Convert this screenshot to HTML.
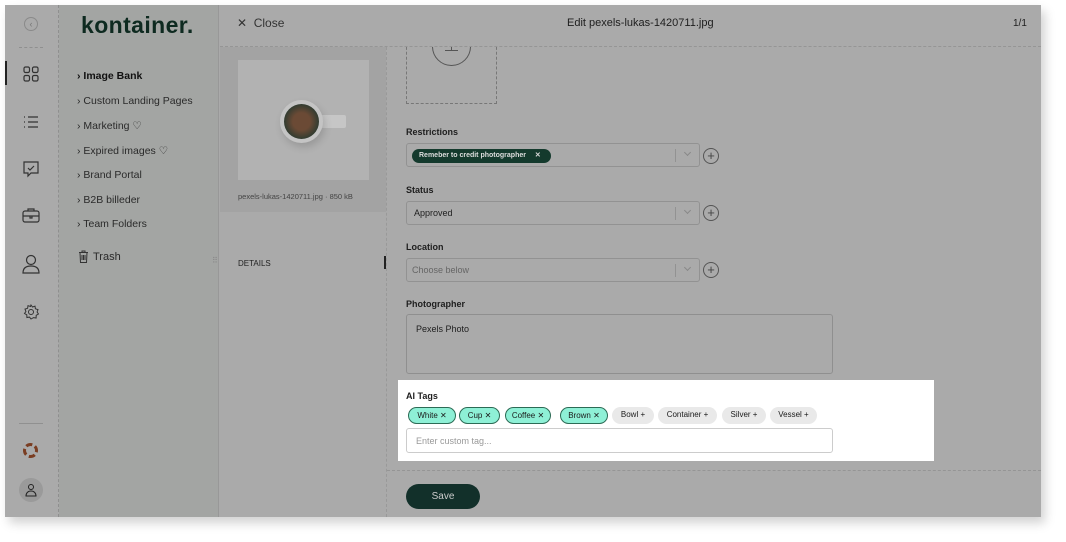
<!DOCTYPE html>
<html><head><meta charset="utf-8"><style>
*{box-sizing:border-box;margin:0;padding:0}
body{width:1066px;height:542px;background:#fff;font-family:"Liberation Sans",sans-serif;position:relative;overflow:hidden;color:#222}
.a{position:absolute}
.frame{left:5px;top:5px;width:1036px;height:512px;background:#aaa;box-shadow:4px 6px 10px rgba(0,0,0,.18)}
.t{position:absolute;font-size:10px;color:#1e1e1e;white-space:nowrap}
.sel{position:absolute;left:406px;width:294px;height:24px;border:1px solid #929292;border-radius:3px}
.sel .sep{position:absolute;right:23px;top:5px;width:1px;height:13px;background:#929292}
.sel .chev{position:absolute;right:9px;top:6px;width:5px;height:5px;border-right:1px solid #888;border-bottom:1px solid #888;transform:rotate(45deg)}
.plus{position:absolute;left:703px;width:16px;height:16px;border:1px solid #555;border-radius:50%;font-size:13px;line-height:13px;text-align:center;color:#444}
.lbl{position:absolute;left:406px;font-size:9px;font-weight:bold;color:#1e1e1e}
.nav{position:absolute;left:77px;font-size:10.5px;color:#2a2a2a}
.tag{position:absolute;top:407px;height:17px;border-radius:9px;font-size:8px;line-height:16px;text-align:center;color:#1a1a1a}
.on{background:#8ef0d6;border:1px solid #2c6b55}
.off{background:#e9e9e9}
</style></head><body>
<div class="a frame"></div>
<div class="a" style="left:58px;top:5px;width:1px;height:512px;border-left:1px dashed #8f8f8f"></div>
<div class="a" style="left:24px;top:17px;width:14px;height:14px;border:1px solid #8a8a8a;border-radius:50%;font-size:9px;line-height:12px;text-align:center;color:#777">‹</div>
<div class="a" style="left:19px;top:47px;width:24px;border-top:1px dashed #8f8f8f"></div>
<div class="a" style="left:5px;top:61px;width:2px;height:24px;background:#222"></div>
<svg class="a" style="left:23px;top:66px" width="16" height="16" fill="none" stroke="#333" stroke-width="1.2"><rect x="1" y="1" width="5.5" height="5.5" rx="1.5"/><rect x="9.5" y="1" width="5.5" height="5.5" rx="1.5"/><rect x="1" y="9.5" width="5.5" height="5.5" rx="1.5"/><rect x="9.5" y="9.5" width="5.5" height="5.5" rx="1.5"/></svg>
<svg class="a" style="left:23px;top:115px" width="16" height="14" stroke="#333" stroke-width="1.2"><path d="M1 2h1M1 7h1M1 12h1M5 2h10M5 7h10M5 12h10"/></svg>
<svg class="a" style="left:22px;top:160px" width="18" height="18" fill="none" stroke="#333" stroke-width="1.2"><path d="M2 2h14v11H9l-3 3v-3H2z"/><path d="M6 8l2 2 4-4"/></svg>
<svg class="a" style="left:22px;top:207px" width="18" height="16" fill="none" stroke="#333" stroke-width="1.2"><rect x="1" y="4" width="16" height="11" rx="2"/><path d="M6 4V2h6v2M1 9h16M8 9v2h2V9"/></svg>
<svg class="a" style="left:22px;top:254px" width="18" height="20" fill="none" stroke="#333" stroke-width="1.2"><circle cx="9" cy="6" r="4.5"/><path d="M1 19c0-5 3-7 8-7s8 2 8 7z"/></svg>
<svg class="a" style="left:23px;top:304px" width="16" height="16" fill="none" stroke="#333" stroke-width="1"><circle cx="8" cy="8" r="2.5"/><path d="M8 1l1.5 2 2.5-.8.4 2.6 2.6.8-.9 2.4 1.4 2-2.3 1.3-.1 2.7-2.6-.4L8 15l-1.5-1.9-2.6.4-.1-2.7L1.5 9.5l1.4-2L2 5.1l2.6-.8.4-2.6 2.5.8z"/></svg>
<div class="a" style="left:19px;top:423px;width:24px;border-top:1px solid #909090"></div>
<svg class="a" style="left:22px;top:442px" width="17" height="17"><circle cx="8.5" cy="8.5" r="6" fill="none" stroke="#7a3d22" stroke-width="3" stroke-dasharray="6.4 3" stroke-dashoffset="4.7"/></svg>
<div class="a" style="left:19px;top:478px;width:24px;height:24px;border-radius:50%;background:#9a9a9a"></div>
<svg class="a" style="left:25px;top:483px" width="12" height="14" fill="none" stroke="#222" stroke-width="1"><circle cx="6" cy="4" r="2.5"/><path d="M1 13c0-3 2-5 5-5s5 2 5 5z"/></svg>
<div class="a" style="left:59px;top:5px;width:160px;height:512px;background:#a3a5a3;border-right:1px solid #989898"></div>
<div class="a" style="left:81px;top:12px;font-size:23px;font-weight:bold;color:#0e2a20;letter-spacing:0.4px">kontainer.</div>
<div class="nav" style="top:70px;font-weight:bold;color:#111">› Image Bank</div>
<div class="nav" style="top:95px">› Custom Landing Pages</div>
<div class="nav" style="top:120px">› Marketing ♡</div>
<div class="nav" style="top:145px">› Expired images ♡</div>
<div class="nav" style="top:169px">› Brand Portal</div>
<div class="nav" style="top:194px">› B2B billeder</div>
<div class="nav" style="top:218px">› Team Folders</div>
<svg class="a" style="left:78px;top:250px" width="11" height="13" fill="none" stroke="#333" stroke-width="1"><path d="M1 2.5h9M4 2.5V1h3v1.5M2 2.5l.5 10h6l.5-10M4 5v5M5.5 5v5M7 5v5"/></svg>
<div class="nav" style="left:93px;top:251px;font-size:11px">Trash</div>
<div class="a" style="left:212px;top:256px;font-size:8px;color:#888">⠿</div>
<div class="a" style="left:220px;top:46px;width:821px;border-top:1px dashed #959595"></div>
<div class="t" style="left:237px;top:16px;font-size:12px;color:#333">✕ &nbsp;Close</div>
<div class="t" style="left:567px;top:17px;font-size:11px">Edit pexels-lukas-1420711.jpg</div>
<div class="t" style="left:1013px;top:18px;font-size:10px">1/1</div>
<div class="a" style="left:220px;top:47px;width:166px;height:165px;background:#a3a3a3"></div>
<div class="a" style="left:238px;top:60px;width:131px;height:120px;background:#b2b2b2"></div>
<div class="a" style="left:320px;top:115px;width:26px;height:13px;background:#c6c6c6;border-radius:2px"></div>
<div class="a" style="left:280px;top:100px;width:43px;height:43px;border-radius:50%;background:#c4c4c4;box-shadow:2px 4px 8px rgba(0,0,0,.15)"></div>
<div class="a" style="left:284px;top:104px;width:35px;height:35px;border-radius:50%;background:radial-gradient(circle,#6b4a35 0 35%,#2a3a30 75%)"></div>
<div class="t" style="left:238px;top:192px;font-size:7.5px;color:#444">pexels-lukas-1420711.jpg · 850 kB</div>
<div class="t" style="left:238px;top:259px;font-size:8px;color:#222">DETAILS</div>
<div class="a" style="left:384px;top:256px;width:2px;height:13px;background:#222"></div>
<div class="a" style="left:386px;top:47px;width:1px;height:470px;border-left:1px dashed #999"></div>
<div class="a" style="left:387px;top:47px;width:200px;height:60px;overflow:hidden">
<div class="a" style="left:19px;top:-10px;width:91px;height:67px;border:1px dashed #777;border-top:none"></div>
<div class="a" style="left:45px;top:-20px;width:39px;height:39px;border:1px solid #555;border-radius:50%"></div>
<div class="a" style="left:64px;top:0;width:1px;height:4px;background:#555"></div>
<div class="a" style="left:58px;top:3px;width:13px;height:1px;background:#555"></div>
</div>
<div class="lbl" style="top:127px">Restrictions</div>
<div class="sel" style="top:143px"><div class="sep"></div><div class="chev"></div>
<div class="a" style="left:5px;top:5px;height:14px;width:139px;background:#143a2d;border-radius:7px;color:#ddd;font-size:7px;line-height:14px;padding-left:7px;font-weight:bold">Remeber to credit photographer <span style="margin-left:7px">✕</span></div></div>
<div class="plus" style="top:148px">+</div>
<div class="lbl" style="top:185px">Status</div>
<div class="sel" style="top:201px"><div class="sep"></div><div class="chev"></div><div class="t" style="left:7px;top:6px;font-size:9px">Approved</div></div>
<div class="plus" style="top:205px">+</div>
<div class="lbl" style="top:242px">Location</div>
<div class="sel" style="top:258px"><div class="sep"></div><div class="chev"></div><div class="t" style="left:5px;top:6px;font-size:9px;color:#666">Choose below</div></div>
<div class="plus" style="top:262px">+</div>
<div class="lbl" style="top:299px">Photographer</div>
<div class="a" style="left:406px;top:314px;width:427px;height:60px;border:1px solid #8f8f8f;border-radius:3px"></div>
<div class="t" style="left:416px;top:324px;font-size:9px">Pexels Photo</div>
<div class="a" style="left:398px;top:380px;width:536px;height:81px;background:#fff"></div>
<div class="lbl" style="top:391px">AI Tags</div>
<div class="tag on" style="left:408px;width:48px">White ✕</div>
<div class="tag on" style="left:459px;width:41px">Cup ✕</div>
<div class="tag on" style="left:505px;width:46px">Coffee ✕</div>
<div class="tag on" style="left:560px;width:48px">Brown ✕</div>
<div class="tag off" style="left:612px;width:42px">Bowl +</div>
<div class="tag off" style="left:658px;width:59px">Container +</div>
<div class="tag off" style="left:722px;width:44px">Silver +</div>
<div class="tag off" style="left:770px;width:47px">Vessel +</div>
<div class="a" style="left:406px;top:428px;width:427px;height:25px;border:1px solid #ccc;border-radius:3px"></div>
<div class="t" style="left:416px;top:436px;font-size:9px;color:#999">Enter custom tag...</div>
<div class="a" style="left:387px;top:470px;width:654px;border-top:1px dashed #959595"></div>
<div class="a" style="left:406px;top:484px;width:74px;height:25px;border-radius:13px;background:#12302a;color:#ccc;font-size:10px;line-height:25px;text-align:center">Save</div>
</body></html>
